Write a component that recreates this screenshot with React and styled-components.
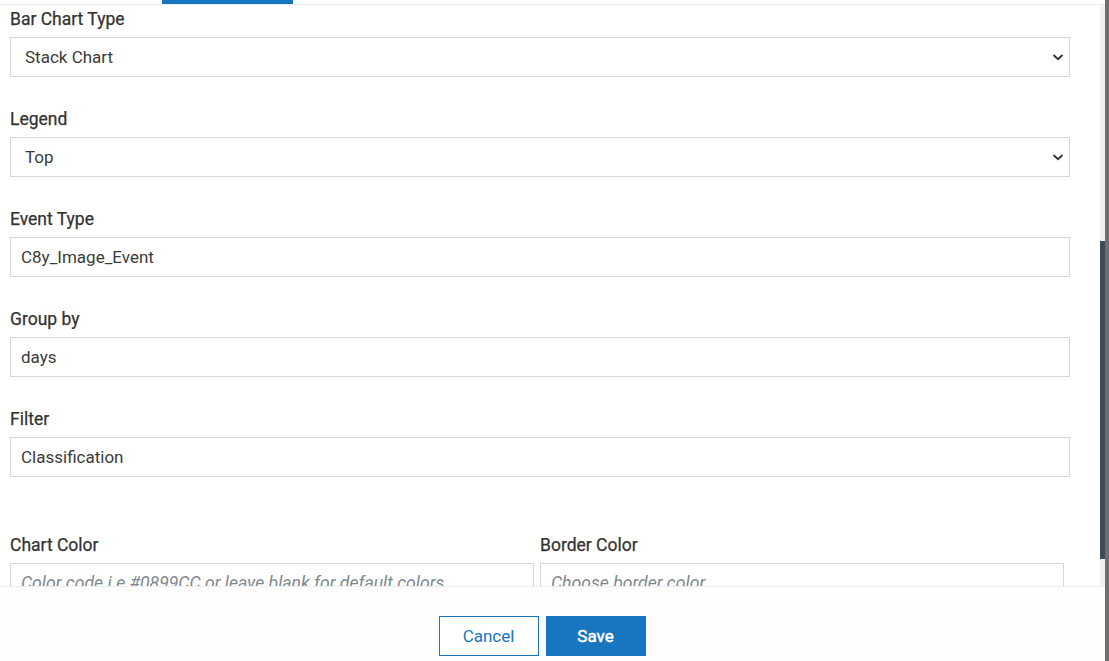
import styled, { createGlobalStyle } from "styled-components";

const GlobalStyle = createGlobalStyle`
    html, body {
        margin: 0;
        padding: 0;
        height: 100%;
        background: #6f6f6f;
        font-family: Roboto, "Liberation Sans", sans-serif;
    }
    #root {
        height: 100%;
    }
    * {
        box-sizing: border-box;
    }
`

const Modal = styled.div`
    width: 1105px;
    height: 661px;
    background: #fff;
    display: flex;
    flex-direction: column;
    overflow: hidden;
`

const TabBar = styled.div`
    height: 5px;
    flex: none;
    border-bottom: 1px solid #e9ebee;
    padding-left: 162px;
    padding-right: 5px;
`

const ActiveTab = styled.div`
    width: 131px;
    height: 4px;
    background: #1776bf;
`

const Body = styled.div`
    flex: 1;
    display: flex;
    min-height: 0;
`

const Scroller = styled.div`
    flex: 1;
    overflow: hidden;
    padding: 3px 0 0 10px;
`

const Track = styled.div`
    width: 5px;
    flex: none;
    background: #f1f1f1;
    padding-top: 236px;
`

const Thumb = styled.div`
    height: 318px;
    background: #3c4b57;
`

const Field = styled.div`
    width: ${p => p.$width || "1060px"};
    margin-bottom: ${p => p.$gap || "31px"};
`

const Label = styled.div`
    font-size: 17.5px;
    font-weight: 400;
    -webkit-text-stroke: 0.25px #333;
    line-height: 22px;
    color: #333;
    margin-bottom: 7px;
`

const Control = styled.div`
    position: relative;
    height: 40px;
    border: 1px solid #d3d7db;
    background: #fff;
    display: flex;
    align-items: center;
    padding: 0 ${p => p.$select ? "14px" : "10px"};
    font-size: ${p => p.$placeholder ? "17.6px" : "17px"};
    color: ${p => p.$placeholder ? "#7f888f" : "#3b3b3b"};
    font-style: ${p => p.$placeholder ? "italic" : "normal"};
    white-space: nowrap;
    overflow: hidden;
`

const Chevron = styled.svg`
    position: absolute;
    right: 5px;
    top: 14px;
    width: 12px;
    height: 10px;
`

const Row = styled.div`
    display: grid;
    grid-template-columns: 524px 524px;
    column-gap: 6px;
    padding-top: 26px;
`

const Footer = styled.div`
    height: 75px;
    flex: none;
    border-top: 1px solid #eceef0;
    display: flex;
    justify-content: center;
    align-items: flex-start;
    gap: 7px;
    padding: 29px 21px 0 0;
    background: #fdfdfd;
`

const Button = styled.button`
    width: 100px;
    height: 40px;
    font-family: Roboto, "Liberation Sans", sans-serif;
    font-size: 17px;
    font-weight: 400;
    color: ${p => p.$primary ? "#fff" : "#1776bf"};
    background: ${p => p.$primary ? "#1776bf" : "#fff"};
    border: 1px solid #1776bf;
    ${p => p.$primary && "-webkit-text-stroke: 0.5px #fff;"}
    cursor: pointer;
`

const SelectBox = ({ children }) => (
    <Control $select>
        {children}
        <Chevron viewBox="0 0 12 10">
            <path d="M1.5 3 L6 7.2 L10.5 3" fill="none" stroke="#333" strokeWidth="1.9" />
        </Chevron>
    </Control>
)

const App = () => (
    <>
        <GlobalStyle />
        <Modal>
            <TabBar>
                <ActiveTab />
            </TabBar>
            <Body>
                <Scroller>
                    <Field>
                        <Label>Bar Chart Type</Label>
                        <SelectBox>Stack Chart</SelectBox>
                    </Field>
                    <Field>
                        <Label>Legend</Label>
                        <SelectBox>Top</SelectBox>
                    </Field>
                    <Field>
                        <Label>Event Type</Label>
                        <Control>C8y_Image_Event</Control>
                    </Field>
                    <Field>
                        <Label>Group by</Label>
                        <Control>days</Control>
                    </Field>
                    <Field>
                        <Label>Filter</Label>
                        <Control>Classification</Control>
                    </Field>
                    <Row>
                        <Field $width="524px">
                            <Label>Chart Color</Label>
                            <Control $placeholder>Color code i.e #0899CC or leave blank for default colors</Control>
                        </Field>
                        <Field $width="524px">
                            <Label>Border Color</Label>
                            <Control $placeholder>Choose border color</Control>
                        </Field>
                    </Row>
                </Scroller>
                <Track>
                    <Thumb />
                </Track>
            </Body>
            <Footer>
                <Button>Cancel</Button>
                <Button $primary>Save</Button>
            </Footer>
        </Modal>
    </>
)

export default App
